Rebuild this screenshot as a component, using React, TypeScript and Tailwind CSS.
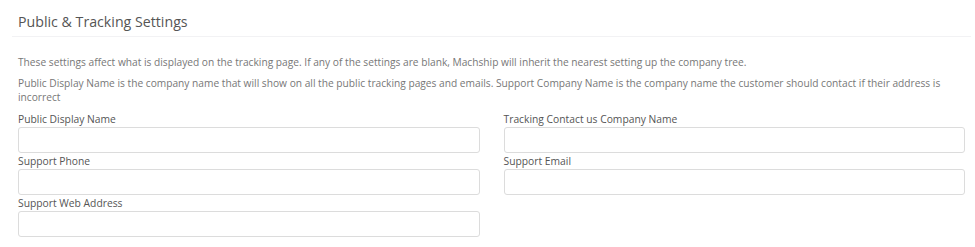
const fields = [
  'Public Display Name',
  'Tracking Contact us Company Name',
  'Support Phone',
  'Support Email',
  'Support Web Address',
];

const Field = ({ label }: { label: string }) => (
  <div className="flex flex-col">
    <label className="text-[10.3px] leading-[16px] text-[#555]">{label}</label>
    <input
      type="text"
      className="h-[26px] w-full rounded-[3px] border border-[#dcdcdc] bg-white px-2 text-[11px] outline-none"
    />
  </div>
);

export default function App() {
  return (
    <div
      className="min-h-[247px] w-full bg-white pl-[12px] pr-[4px]"
      style={{ fontFamily: '"Open Sans", "Liberation Sans", sans-serif' }}
    >
      <div className="border-b border-[#f2f2f4] pl-[6px] pt-[12px] pb-[4px]">
        <h2 className="text-[14.2px] leading-[20px] text-[#555]">Public &amp; Tracking Settings</h2>
      </div>
      <div className="pl-[6px] pr-[6px] pt-[18px]">
        <p className="text-[10.2px] leading-[14px] text-[#777]">
          These settings affect what is displayed on the tracking page. If any of the settings are blank, Machship will inherit the nearest setting up the company tree.
        </p>
        <p className="mt-[7px] text-[10.2px] leading-[14px] text-[#777]">
          Public Display Name is the company name that will show on all the public tracking pages and emails. Support Company Name is the company name the customer should contact if their address is incorrect
        </p>
        <div className="mt-[7px] grid grid-cols-2 gap-x-6">
          {fields.map((f) => (
            <Field key={f} label={f} />
          ))}
        </div>
      </div>
    </div>
  );
}
